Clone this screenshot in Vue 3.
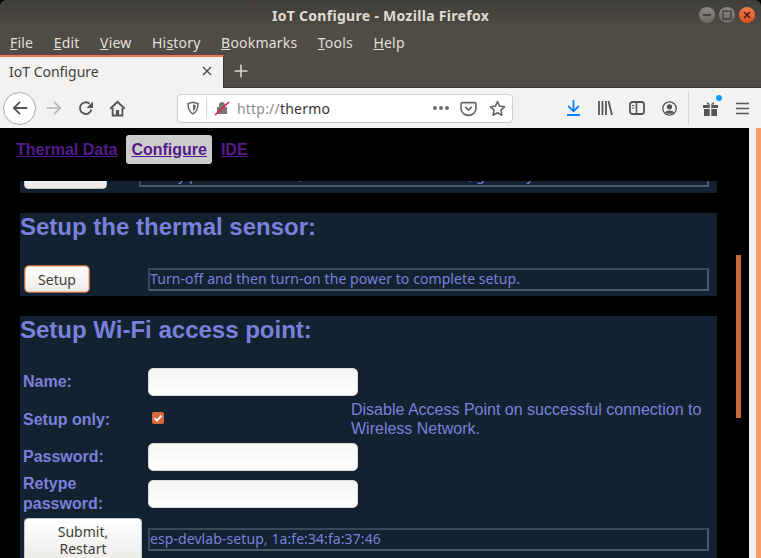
<template>
  <div class="window">
    <header class="titlebar">
      <span class="title">IoT Configure - Mozilla Firefox</span>
      <div class="wm-buttons">
        <span class="wm"><svg viewBox="0 0 16 16" width="16" height="16"><path d="M4 8h8" stroke="#35342f" stroke-width="1.5"/></svg></span>
        <span class="wm"><svg viewBox="0 0 16 16" width="16" height="16"><rect x="4" y="4" width="8" height="8" fill="none" stroke="#35342f" stroke-width="1.2"/></svg></span>
        <span class="wm close"><svg viewBox="0 0 16 16" width="16" height="16"><path d="M5 5l6 6M11 5l-6 6" stroke="#3a1a0c" stroke-width="1.4"/></svg></span>
      </div>
    </header>
    <nav class="menubar">
      <span v-for="m in menus" :key="m.rest" class="menu">{{ m.pre }}<u>{{ m.key }}</u>{{ m.rest }}</span>
    </nav>
    <div class="tabbar">
      <div class="tab">
        <span class="tab-title">IoT Configure</span>
        <svg class="tab-x" viewBox="0 0 12 12" width="12" height="12"><path d="M2 2l8 8M10 2l-8 8" stroke="#4a4a4a" stroke-width="1.4"/></svg>
      </div>
      <svg class="plus" viewBox="0 0 16 16" width="16" height="16"><path d="M8 1.5v13M1.5 8h13" stroke="#d8d6d2" stroke-width="1.6"/></svg>
    </div>
    <div class="toolbar">
      <span class="back"><svg viewBox="0 0 16 16" width="18" height="18"><path d="M14.5 8H2.5M8 2.5L2.5 8 8 13.5" fill="none" stroke="#555" stroke-width="1.6"/></svg></span>
      <svg class="forward" viewBox="0 0 16 16" width="18" height="18"><path d="M1.5 8h12M8 2.5L13.5 8 8 13.5" fill="none" stroke="#b5b5b5" stroke-width="1.5"/></svg>
      <svg class="reload" viewBox="0 0 16 16" width="16" height="16"><path d="M13.4 9.5A5.8 5.8 0 1 1 11.5 3.7" fill="none" stroke="#555" stroke-width="1.9"/><path d="M15 1.5V8H8.5z" fill="#555"/></svg>
      <svg class="home" viewBox="0 0 16 16" width="17" height="17"><path d="M1.2 8.2L8 1.8l6.8 6.4" fill="none" stroke="#555" stroke-width="1.8"/><path d="M3.4 7.5V14.6H12.6V7.5" fill="none" stroke="#555" stroke-width="1.7"/><path d="M6.5 9.5h3V15h-3z" fill="#555"/></svg>
      <div class="urlbar">
        <svg class="shield" viewBox="0 0 14 14" width="14" height="14"><path d="M7 1.2l5 1.3c0 5-1.5 8.5-5 10.3C3.5 11 2 7.5 2 2.5z" fill="none" stroke="#666" stroke-width="1.5"/><path d="M7 3.5l2.8.7C9.7 7 9 9 7 10.3z" fill="#666"/></svg>
        <span class="url-sep"></span>
        <svg class="lock" viewBox="0 0 16 16" width="16" height="16"><path d="M5 7V5a3 3 0 0 1 6 0v2h2v7H3V7z" fill="#777"/><path d="M1 15L15 2" stroke="#f0124b" stroke-width="1.6"/></svg>
        <span class="url"><span class="url-dim">http://</span>thermo</span>
        <span class="url-right">
          <span class="dots"><i></i><i></i><i></i></span>
          <svg viewBox="0 0 16 16" width="17" height="17"><path d="M2 2.5h12a1 1 0 0 1 1 1V8a7 6.5 0 0 1-14 0V3.5a1 1 0 0 1 1-1z" fill="none" stroke="#666" stroke-width="1.5"/><path d="M5 6.5L8 9.5l3-3" fill="none" stroke="#666" stroke-width="1.6"/></svg>
          <svg class="star" viewBox="0 0 16 16" width="17" height="17"><path d="M8 1.5l2 4.3 4.6.6-3.4 3.2.9 4.7L8 12l-4.1 2.3.9-4.7L1.4 6.4 6 5.8z" fill="none" stroke="#666" stroke-width="1.5" stroke-linejoin="round"/></svg>
        </span>
      </div>
      <div class="tools">
        <svg class="t-download" viewBox="0 0 13 16" width="13" height="16"><path d="M6.5 0v11M1.2 6L6.5 11.3 11.8 6M0 15h13" fill="none" stroke="#0a84ff" stroke-width="1.8"/></svg>
        <svg class="t-library" viewBox="0 0 15 14" width="15" height="14"><path d="M1 0v14M4.5 0v14M8 0v14M10.5 0l3.5 14" fill="none" stroke="#555" stroke-width="1.8"/></svg>
        <svg class="t-sidebar" viewBox="0 0 16 14" width="16" height="14"><rect x="1" y="1" width="14" height="12" rx="2.5" fill="none" stroke="#555" stroke-width="1.8"/><path d="M7.5 1v12" stroke="#555" stroke-width="1.6"/><path d="M3 4.5h2.5M3 7h2.5" stroke="#555"/></svg>
        <svg class="t-account" viewBox="0 0 15 15" width="15" height="15"><circle cx="7.5" cy="7.5" r="6.7" fill="none" stroke="#555" stroke-width="1.3"/><circle cx="7.5" cy="5.8" r="2.6" fill="#555"/><path d="M3 11.5c1-2.8 8-2.8 9 0-2 1.8-7 1.8-9 0z" fill="#555"/></svg>
        <span class="t-sep"></span>
        <span class="t-gift">
          <svg viewBox="0 0 15 15" width="15" height="15"><path d="M0 4h6.7v3H0zM8.3 4H15v3H8.3zM1 8h5.7v7H1zM8.3 8H14v7H8.3zM4 1l3.5 2.500L11 1v2.500H4z" fill="#555"/></svg>
          <i class="gift-dot"></i>
        </span>
        <svg class="t-menu" viewBox="0 0 13 13" width="13" height="13"><path d="M0 1.5h13M0 6.5h13M0 11.5h13" stroke="#555" stroke-width="1.7"/></svg>
      </div>
    </div>

    <main class="page">
      <div class="links">
        <a href="#" class="link">Thermal Data</a>
        <a href="#" class="link active">Configure</a>
        <a href="#" class="link">IDE</a>
      </div>
      <div class="cards">
        <!-- Placeholder: the reference scrolls this card out of view, so its button label and message can't be read.
             Only descender tips show; this wording is invented to line them up, not copied from the original. -->
        <section class="card clipped">
          <div class="row">
            <button class="btn clip-btn">Save</button>
            <div class="output clip-out">Use by press the button, then it will read the data, go on by the menu on the left.</div>
          </div>
        </section>
        <section class="card sensor">
          <h2>Setup the thermal sensor:</h2>
          <div class="row">
            <button class="btn setup">Setup</button>
            <div class="output setup-out">Turn-off and then turn-on the power to complete setup.</div>
          </div>
        </section>
        <section class="card wifi">
          <h2>Setup Wi-Fi access point:</h2>
          <div class="form">
            <label class="lbl">Name:</label>
            <input class="field" type="text" />
            <span></span>
            <label class="lbl">Setup only:</label>
            <span class="check-cell">
              <span class="check"><svg viewBox="0 0 12 12" width="12" height="12"><path d="M2.5 6.2l2.5 2.4 4.500-5" fill="none" stroke="#fff" stroke-width="1.8"/></svg></span>
            </span>
            <span class="note">Disable Access Point on successful connection to Wireless Network.</span>
            <label class="lbl">Password:</label>
            <input class="field" type="password" />
            <span></span>
            <label class="lbl">Retype password:</label>
            <input class="field" type="password" />
            <span></span>
          </div>
          <div class="row submit-row">
            <button class="btn submit">Submit, Restart</button>
            <div class="output submit-out">esp-devlab-setup, 1a:fe:34:fa:37:46</div>
          </div>
        </section>
      </div>
      <span class="scroll-thumb"></span>
    </main>
    <div class="rail"></div>
    <div class="edge"></div>
  </div>
</template>

<script setup>
const menus = [
  { pre: '', key: 'F', rest: 'ile' },
  { pre: '', key: 'E', rest: 'dit' },
  { pre: '', key: 'V', rest: 'iew' },
  { pre: 'Hi', key: 's', rest: 'tory' },
  { pre: '', key: 'B', rest: 'ookmarks' },
  { pre: '', key: 'T', rest: 'ools' },
  { pre: '', key: 'H', rest: 'elp' }
]
</script>

<style>
html, body {
  margin: 0;
  background: #000;
  overflow: hidden;
}
</style>

<style scoped>
.window {
  position: relative;
  width: 761px;
  height: 558px;
  overflow: hidden;
  display: flex;
  flex-direction: column;
  font-family: "Noto Sans", sans-serif;
}

.titlebar {
  height: 30px;
  flex: none;
  background: linear-gradient(#403e39, #4f4c45);
  display: flex;
  align-items: center;
  justify-content: center;
  position: relative;
  border-radius: 6px 6px 0 0;
}
.title {
  color: #dfdbd2;
  font-size: 14px;
  font-weight: 700;
  letter-spacing: 0.3px;
}
.wm-buttons {
  position: absolute;
  right: 6px;
  top: 7px;
  display: flex;
  gap: 4px;
}
.wm {
  width: 16px;
  height: 16px;
  box-sizing: border-box;
  border-radius: 50%;
  background: linear-gradient(#8b8981, #6b6961);
  display: flex;
}
.close {
  background: linear-gradient(#f0794a, #d9501f);
}

.menubar {
  height: 25px;
  flex: none;
  background: #4f4c45;
  display: flex;
  align-items: center;
  padding-left: 10px;
  gap: 20.5px;
  color: #e2dfd8;
  font-size: 14px;
  letter-spacing: 0.2px;
}

.tabbar {
  height: 33px;
  flex: none;
  background: #4f4c45;
  display: flex;
  align-items: center;
  border-bottom: 1px solid #3a3833;
  box-sizing: border-box;
}
.tab {
  width: 224px;
  height: 33px;
  box-sizing: border-box;
  background: #f3f2f0;
  border-top: 2px solid #e9784b;
  display: flex;
  align-items: center;
  padding: 0 9px 2px 9px;
  justify-content: space-between;
  border-right: 1px solid #3a3833;
}
.tab-title {
  font-size: 14px;
  color: #3d3d3b;
}
.tab-x {
  margin-right: 1px;
}
.plus {
  margin-left: 9px;
}

.toolbar {
  height: 40px;
  flex: none;
  box-sizing: border-box;
  background: #f3f2f0;
  display: flex;
  align-items: center;
  padding-left: 3px;
}
.back {
  width: 33px;
  height: 33px;
  box-sizing: border-box;
  border: 1px solid #a9a9a7;
  border-radius: 50%;
  background: #fff;
  display: flex;
  align-items: center;
  justify-content: center;
}
.forward {
  margin-left: 9px;
}
.reload {
  margin-left: 15px;
}
.home {
  margin-left: 15px;
}
.urlbar {
  margin-left: 51px;
  width: 336px;
  height: 29px;
  box-sizing: border-box;
  background: #fff;
  border: 1px solid #cfcfcd;
  border-radius: 4px;
  display: flex;
  align-items: center;
  padding-left: 8px;
}
.url-sep {
  width: 1px;
  height: 22px;
  background: #d6d6d4;
  margin-left: 6px;
}
.lock {
  margin-left: 7px;
}
.url {
  margin-left: 7px;
  font-size: 14px;
  letter-spacing: 0.2px;
  color: #333;
}
.url-dim {
  color: #8c8c8c;
}
.url-right {
  margin-left: auto;
  display: flex;
  align-items: center;
  gap: 11px;
  padding-right: 6px;
}
.star {
  margin-left: 1px;
}
.dots {
  display: flex;
  gap: 2px;
}
.dots i {
  width: 4px;
  height: 4px;
  border-radius: 50%;
  background: #707070;
}
.tools {
  margin-left: 51px;
  display: flex;
  align-items: center;
  flex: 1;
  height: 34px;
}
.t-download {
  margin-left: 3px;
}
.t-library {
  margin-left: 18px;
}
.t-sidebar {
  margin-left: 16px;
}
.t-account {
  margin-left: 17px;
}
.t-sep {
  width: 1px;
  height: 34px;
  background: #d8d8d6;
  margin-left: 11px;
}
.t-gift {
  position: relative;
  display: flex;
  margin-left: 14px;
}
.gift-dot {
  position: absolute;
  top: -6px;
  right: -4px;
  width: 6px;
  height: 6px;
  border-radius: 50%;
  background: #0a9cff;
}
.t-menu {
  margin-left: 18px;
}

.page {
  flex: 1;
  min-height: 0;
  background: #000;
  width: 749px;
  overflow: hidden;
  font-family: "Liberation Sans", Arial, sans-serif;
}
.links {
  height: 53px;
  box-sizing: border-box;
  padding: 7px 0 0 11px;
  display: flex;
  align-items: flex-start;
}
.link {
  color: #551a8b;
  font-size: 16px;
  font-weight: 700;
  line-height: 29px;
  padding: 0 5px;
  margin-right: 4px;
  border-radius: 3px;
}
.active {
  background: #cccccc;
}
.cards {
  height: 377px;
  overflow: hidden;
  padding-left: 20px;
  display: flex;
  flex-direction: column;
  gap: 20px;
}
.card {
  width: 697px;
  flex: none;
  background: #132231;
  box-sizing: border-box;
}
.clipped {
  height: 12px;
  overflow: hidden;
  display: flex;
  flex-direction: column;
  justify-content: flex-end;
  padding-bottom: 4px;
}
h2 {
  margin: 0;
  font-size: 24px;
  line-height: 28px;
  font-weight: 700;
  color: #7b80dc;
}
.sensor {
  height: 83px;
}
.row {
  display: flex;
  align-items: center;
}
.sensor .row {
  margin-top: 24px;
}
.btn {
  font-family: "Noto Sans", sans-serif;
  font-size: 14px;
  color: #3d3d3b;
  background: linear-gradient(#ffffff, #ecebe8);
  border: 1px solid #c8c6c2;
  border-radius: 4px;
  padding: 0;
  box-sizing: border-box;
  flex: none;
}
.setup {
  width: 66px;
  height: 28px;
  margin-left: 4px;
  border: 1px solid #c0673c;
  border-radius: 5px;
  box-shadow: inset 0 0 0 1px #eec3ab;
}
.clip-btn {
  width: 83px;
  height: 28px;
  margin-left: 4px;
}
.output {
  box-sizing: border-box;
  border: 2px solid;
  border-color: #39485a #4b5a6b #4b5a6b #39485a;
  color: #7b80dc;
  font-family: "Noto Sans", sans-serif;
  font-size: 14px;
  letter-spacing: 0.08px;
  line-height: 18px;
  height: 23px;
  padding: 0;
  white-space: nowrap;
  overflow: hidden;
  width: 561px;
  background: #132231;
}
.setup-out {
  margin-left: 58px;
}
.clip-out {
  margin-left: 32px;
  width: 570px;
}
.wifi {
  height: 260px;
}
.form {
  display: grid;
  grid-template-columns: 125px 203px 1fr;
  grid-template-rows: 28px 39px 28px 38px;
  row-gap: 4px;
  margin-top: 24px;
  padding-left: 3px;
  align-items: center;
}
.lbl {
  color: #7b80dc;
  font-size: 16px;
  font-weight: 700;
  line-height: 20px;
}
.field {
  box-sizing: border-box;
  width: 210px;
  height: 28px;
  border: 1px solid #d9d9d6;
  border-radius: 5px;
  background: linear-gradient(#f5f5f3, #ffffff);
  padding: 0;
}
.check-cell {
  display: flex;
  padding-left: 4px;
  margin-bottom: 3px;
}
.check {
  width: 12px;
  height: 12px;
  border-radius: 2px;
  background: #d9683a;
  display: flex;
}
.note {
  color: #7b80dc;
  font-size: 16px;
  line-height: 19px;
  width: 366px;
  margin-bottom: 2px;
}
.submit-row {
  margin-top: 5px;
  align-items: flex-start;
}
.submit {
  width: 118px;
  height: 44px;
  margin-left: 4px;
  line-height: 17px;
  padding: 0 20px;
}
.submit-out {
  margin-left: 6px;
  margin-top: 10px;
}
.scroll-thumb {
  position: absolute;
  left: 736px;
  top: 255px;
  width: 5px;
  height: 163px;
  background: #c96a3c;
}
.rail {
  position: absolute;
  left: 749px;
  top: 128px;
  width: 7px;
  bottom: 0;
  background: #f3f2f0;
}
.edge {
  position: absolute;
  left: 756px;
  top: 128px;
  width: 5px;
  bottom: 0;
  background: #f79a6c;
}
</style>
